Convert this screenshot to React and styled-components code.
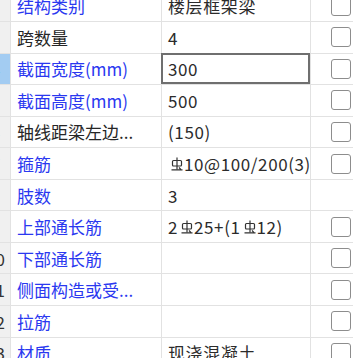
import React from "react";
import styled, { createGlobalStyle } from "styled-components";

const GlobalStyle = createGlobalStyle`
  html, body {
    margin: 0;
    padding: 0;
    background: #ffffff;
    overflow: hidden;
  }
  body {
    font-family: "Noto Sans CJK SC", "Noto Sans", sans-serif;
  }
`;

const Viewport = styled.div`
  width: 353px;
  height: 358px;
  overflow: hidden;
  background: #ffffff;
`;

const Grid = styled.div`
  margin-top: -9.5px;
  margin-left: -20px;
`;

const Row = styled.div`
  display: grid;
  grid-template-columns: 31px 151px 149px 62px;
  height: 31.55px;
`;

const Cell = styled.div`
  position: relative;
  box-sizing: border-box;
  border-right: 1px solid #e2e2e2;
  border-bottom: 1px solid #e2e2e2;
  display: flex;
  align-items: center;
  white-space: nowrap;
  overflow: hidden;
`;

const IndexCell = styled(Cell)`
  justify-content: center;
  background: ${(p) => (p.$active ? "#a3ccf2" : "#f0f0f0")};
  color: #333333;
  font-size: 17px;
  padding-left: 1px;
`;

const NameCell = styled(Cell)`
  padding-left: 6px;
  font-size: 17px;
  color: ${(p) => (p.$plain ? "#262626" : "#2a38f0")};
`;

const ValueCell = styled(Cell)`
  padding-left: 6px;
  font-size: 17px;
  letter-spacing: 0.6px;
  color: #2b2b2b;
  overflow: ${(p) => (p.$editing ? "visible" : "hidden")};
`;

const Editor = styled.div`
  position: absolute;
  top: -1px;
  left: -1px;
  right: 0;
  bottom: 0;
  box-sizing: border-box;
  border: 2px solid #6f6f6f;
  padding-left: 5px;
  display: flex;
  align-items: center;
  background: #ffffff;
  z-index: 1;
`;

const CheckCell = styled(Cell)`
  padding-left: 20px;
  border-right: none;
`;

const Box = styled.span`
  width: 20px;
  height: 20px;
  box-sizing: border-box;
  border: 1.5px solid #8d8d8d;
  border-radius: 3px;
  background: #ffffff;
`;

const Mark = styled.svg`
  width: 12px;
  height: 14px;
  margin: 0 1px 0 3px;
  flex-shrink: 0;
`;

const RebarMark = () => (
  <Mark viewBox="0 0 12 14" fill="none" stroke="#333" strokeWidth="1.2">
    <path d="M6 0.5V12.5" />
    <rect x="1.5" y="3.5" width="9" height="5.5" rx="1" />
    <path d="M0.5 12.8H11.5M8 10.5l1.8 1.8" />
  </Mark>
);

const Value = styled.span`
  display: flex;
  align-items: center;
`;

const rows = [
  { idx: 2, name: "结构类别", value: "楼层框架梁", check: true },
  { idx: 3, name: "跨数量", plain: true, value: "4", check: true },
  { idx: 4, name: "截面宽度(mm)", value: "300", check: true, editing: true },
  { idx: 5, name: "截面高度(mm)", value: "500", check: true },
  { idx: 6, name: "轴线距梁左边...", plain: true, value: "(150)", check: true },
  {
    idx: 7,
    name: "箍筋",
    value: (
      <Value>
        <RebarMark />
        10@100/200(3)
      </Value>
    ),
    check: true,
  },
  { idx: 8, name: "肢数", value: "3", check: false },
  {
    idx: 9,
    name: "上部通长筋",
    value: (
      <Value>
        2<RebarMark />
        25+(1<RebarMark />
        12)
      </Value>
    ),
    check: true,
  },
  { idx: 10, name: "下部通长筋", value: "", check: true },
  { idx: 11, name: "侧面构造或受...", value: "", check: true },
  { idx: 12, name: "拉筋", value: "", check: true },
  { idx: 13, name: "材质", value: "现浇混凝土", check: true },
];

export default function App() {
  return (
    <Viewport>
      <GlobalStyle />
      <Grid>
        {rows.map((r) => (
          <Row key={r.idx}>
            <IndexCell $active={r.editing}>{r.idx}</IndexCell>
            <NameCell $plain={r.plain}>{r.name}</NameCell>
            <ValueCell $editing={r.editing}>
              {r.editing ? <Editor>{r.value}</Editor> : r.value}
            </ValueCell>
            <CheckCell>{r.check && <Box />}</CheckCell>
          </Row>
        ))}
      </Grid>
    </Viewport>
  );
}
